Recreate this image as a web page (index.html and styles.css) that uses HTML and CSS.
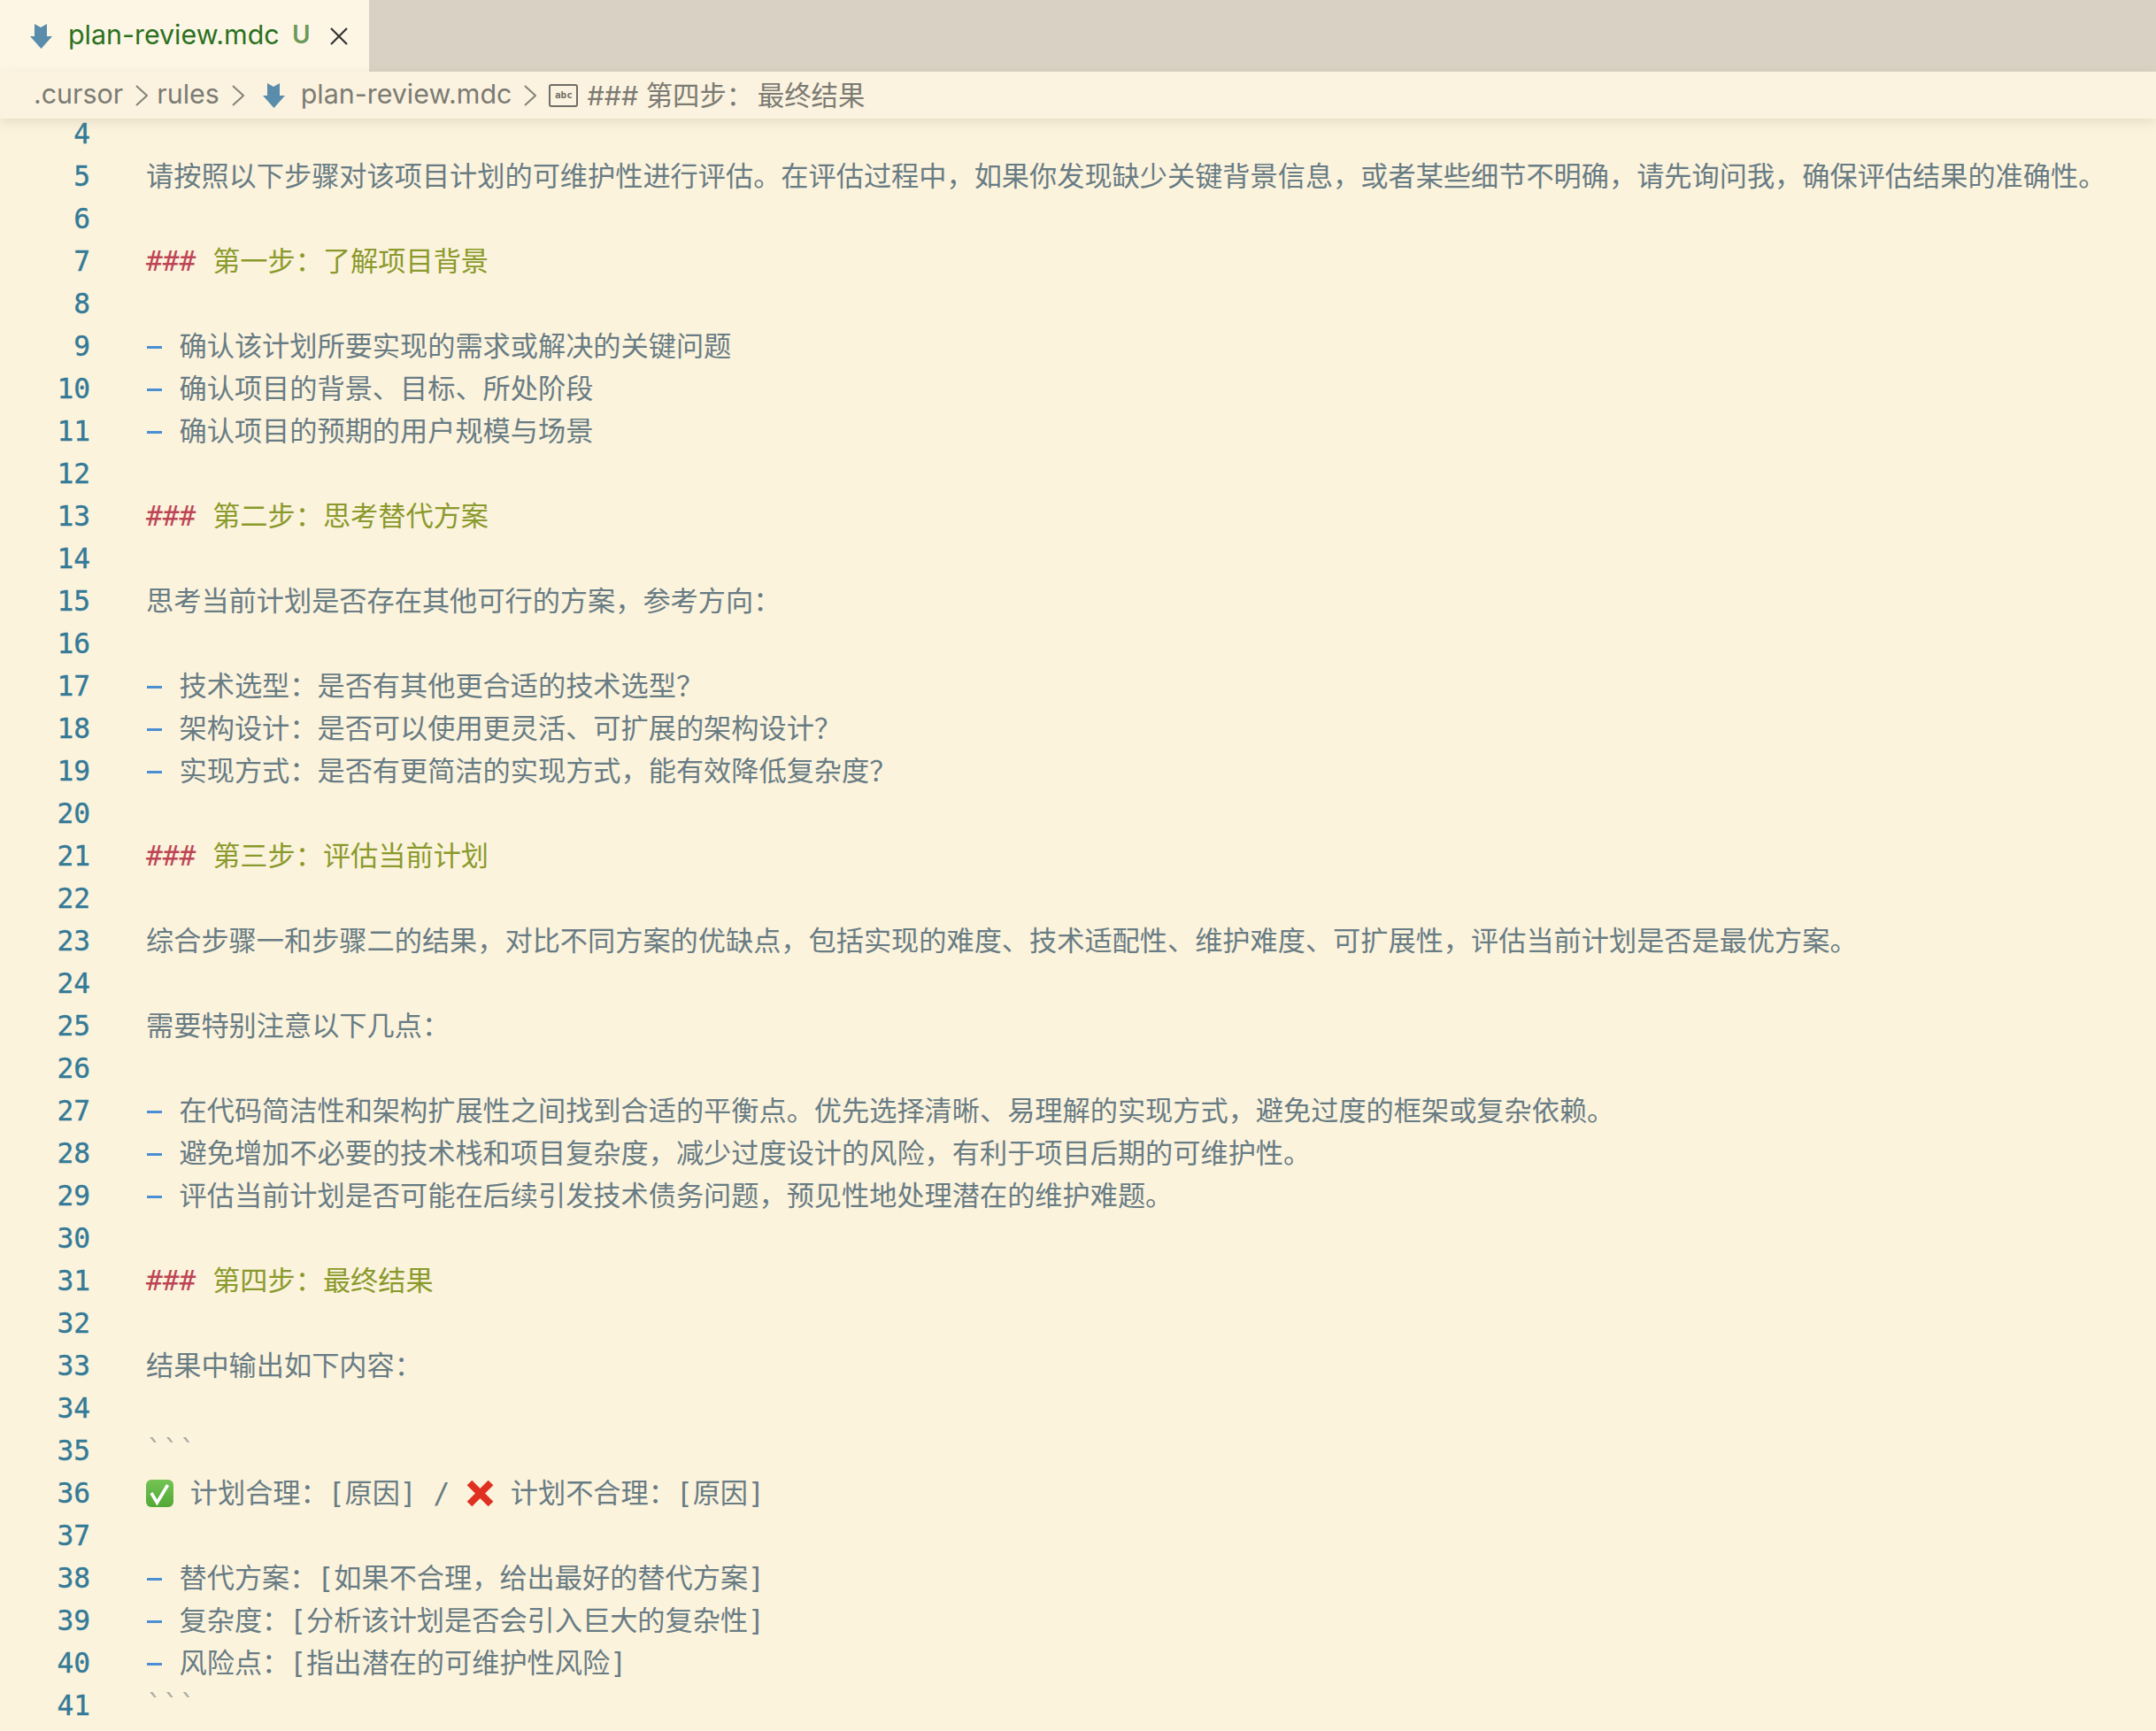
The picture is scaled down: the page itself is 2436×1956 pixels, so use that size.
FILE: index.html
```html
<!DOCTYPE html>
<html lang="zh">
<head>
<meta charset="utf-8">
<title>plan-review.mdc</title>
<link rel="stylesheet" href="styles.css">
</head>
<body>
<div class="window">
  <div class="tabbar">
    <div class="tab">
      <svg class="file-icon" viewBox="0 0 25 28"><path d="M5 0l7 4 7-4v14h6L12.500 28 0 14h5z"/></svg>
      <span class="tab-name">plan-review.mdc</span>
      <span class="tab-status">U</span>
      <svg class="tab-close" viewBox="0 0 20 20"><path d="M1 1l18 18M19 1L1 19"/></svg>
    </div>
  </div>
  <div class="crumbs">
    <span class="crumb">.cursor</span>
    <svg class="chev" viewBox="0 0 14 24"><path d="M1 1l12 11L1 23"/></svg>
    <span class="crumb">rules</span>
    <svg class="chev" viewBox="0 0 14 24"><path d="M1 1l12 11L1 23"/></svg>
    <svg class="file-icon crumb-icon" viewBox="0 0 25 28"><path d="M5 0l7 4 7-4v14h6L12.500 28 0 14h5z"/></svg>
    <span class="crumb">plan-review.mdc</span>
    <svg class="chev" viewBox="0 0 14 24"><path d="M1 1l12 11L1 23"/></svg>
    <span class="abc"><span class="abc-text">abc</span></span>
    <span class="crumb crumb-symbol">### 第四步： <span class="crumb-tail">最终结果</span></span>
  </div>
  <div class="editor">
    <div class="line"><span class="num">4</span><span class="code"></span></div>
    <div class="line"><span class="num">5</span><span class="code">请按照以下步骤对该项目计划的可维护性进行评估。在评估过程中，如果你发现缺少关键背景信息，或者某些细节不明确，请先询问我，确保评估结果的准确性。</span></div>
    <div class="line"><span class="num">6</span><span class="code"></span></div>
    <div class="line"><span class="num">7</span><span class="code"><span class="hash">###</span> <span class="head">第一步：了解项目背景</span></span></div>
    <div class="line"><span class="num">8</span><span class="code"></span></div>
    <div class="line"><span class="num">9</span><span class="code"><span class="dash">-</span> 确认该计划所要实现的需求或解决的关键问题</span></div>
    <div class="line"><span class="num">10</span><span class="code"><span class="dash">-</span> 确认项目的背景、目标、所处阶段</span></div>
    <div class="line"><span class="num">11</span><span class="code"><span class="dash">-</span> 确认项目的预期的用户规模与场景</span></div>
    <div class="line"><span class="num">12</span><span class="code"></span></div>
    <div class="line"><span class="num">13</span><span class="code"><span class="hash">###</span> <span class="head">第二步：思考替代方案</span></span></div>
    <div class="line"><span class="num">14</span><span class="code"></span></div>
    <div class="line"><span class="num">15</span><span class="code">思考当前计划是否存在其他可行的方案，参考方向：</span></div>
    <div class="line"><span class="num">16</span><span class="code"></span></div>
    <div class="line"><span class="num">17</span><span class="code"><span class="dash">-</span> 技术选型：是否有其他更合适的技术选型？</span></div>
    <div class="line"><span class="num">18</span><span class="code"><span class="dash">-</span> 架构设计：是否可以使用更灵活、可扩展的架构设计？</span></div>
    <div class="line"><span class="num">19</span><span class="code"><span class="dash">-</span> 实现方式：是否有更简洁的实现方式，能有效降低复杂度？</span></div>
    <div class="line"><span class="num">20</span><span class="code"></span></div>
    <div class="line"><span class="num">21</span><span class="code"><span class="hash">###</span> <span class="head">第三步：评估当前计划</span></span></div>
    <div class="line"><span class="num">22</span><span class="code"></span></div>
    <div class="line"><span class="num">23</span><span class="code">综合步骤一和步骤二的结果，对比不同方案的优缺点，包括实现的难度、技术适配性、维护难度、可扩展性，评估当前计划是否是最优方案。</span></div>
    <div class="line"><span class="num">24</span><span class="code"></span></div>
    <div class="line"><span class="num">25</span><span class="code">需要特别注意以下几点：</span></div>
    <div class="line"><span class="num">26</span><span class="code"></span></div>
    <div class="line"><span class="num">27</span><span class="code"><span class="dash">-</span> 在代码简洁性和架构扩展性之间找到合适的平衡点。优先选择清晰、易理解的实现方式，避免过度的框架或复杂依赖。</span></div>
    <div class="line"><span class="num">28</span><span class="code"><span class="dash">-</span> 避免增加不必要的技术栈和项目复杂度，减少过度设计的风险，有利于项目后期的可维护性。</span></div>
    <div class="line"><span class="num">29</span><span class="code"><span class="dash">-</span> 评估当前计划是否可能在后续引发技术债务问题，预见性地处理潜在的维护难题。</span></div>
    <div class="line"><span class="num">30</span><span class="code"></span></div>
    <div class="line"><span class="num">31</span><span class="code"><span class="hash">###</span> <span class="head">第四步：最终结果</span></span></div>
    <div class="line"><span class="num">32</span><span class="code"></span></div>
    <div class="line"><span class="num">33</span><span class="code">结果中输出如下内容：</span></div>
    <div class="line"><span class="num">34</span><span class="code"></span></div>
    <div class="line"><span class="num">35</span><span class="code"><span class="fence">```</span></span></div>
    <div class="line"><span class="num">36</span><span class="code"><svg class="emoji" viewBox="0 0 31 31"><defs><linearGradient id="green" x1="0" y1="0" x2="0" y2="1"><stop offset="0" stop-color="#74c454"/><stop offset="1" stop-color="#52a836"/></linearGradient></defs><rect width="31" height="31" rx="6" fill="url(#green)"/><path d="M6 15l6.500 11L24.500 6" fill="none" stroke="#fff" stroke-width="3.600"/></svg> 计划合理：[原因] / <svg class="emoji" viewBox="0 0 31 31"><path d="M3.500 3.500l24 24M27.500 3.500l-24 24" fill="none" stroke="#df3021" stroke-width="8"/></svg> 计划不合理：[原因]</span></div>
    <div class="line"><span class="num">37</span><span class="code"></span></div>
    <div class="line"><span class="num">38</span><span class="code"><span class="dash">-</span> 替代方案：[如果不合理，给出最好的替代方案]</span></div>
    <div class="line"><span class="num">39</span><span class="code"><span class="dash">-</span> 复杂度：[分析该计划是否会引入巨大的复杂性]</span></div>
    <div class="line"><span class="num">40</span><span class="code"><span class="dash">-</span> 风险点：[指出潜在的可维护性风险]</span></div>
    <div class="line"><span class="num">41</span><span class="code"><span class="fence">```</span></span></div>
  </div>
</div>
</body>
</html>
```

FILE: styles.css
```css
html, body {
  margin: 0;
  padding: 0;
  background: #fcf3dd;
}
.window {
  width: 2436px;
  height: 1956px;
  overflow: hidden;
  display: flex;
  flex-direction: column;
  font-family: Inter, "Noto Sans CJK SC", sans-serif;
}
.tabbar {
  height: 81px;
  flex: none;
  background: #d9d1c3;
  display: flex;
}
.tab {
  width: 417px;
  box-sizing: border-box;
  padding: 0 0 0 34px;
  background: #fdf6e4;
  display: flex;
  align-items: center;
}
.file-icon {
  width: 25px;
  height: 28px;
  flex: none;
  fill: #5a8cab;
}
.tab-name {
  margin: -3px 0 0 18px;
  font-size: 30.400px;
  color: #2b701f;
  width: 238px;
  white-space: nowrap;
}
.tab-status {
  margin: -3px 0 0 15px;
  width: 18px;
  font-size: 28px;
  font-weight: 600;
  color: #6a9a58;
}
.tab-close {
  margin-left: 25px;
  width: 20px;
  height: 20px;
  fill: none;
  stroke: #333;
  stroke-width: 2.200;
}
.crumbs {
  position: relative;
  z-index: 2;
  height: 53px;
  flex: none;
  box-sizing: border-box;
  padding-left: 38px;
  background: #fbf3df;
  display: flex;
  align-items: center;
  box-shadow: 0 4px 12px rgba(120, 110, 90, 0.16);
  font-size: 30.400px;
  color: #7c7b74;
  white-space: nowrap;
}
.crumb {
  margin-top: -3px;
}
.chev {
  width: 14px;
  height: 24px;
  margin: 0 10px 0 14px;
  flex: none;
  fill: none;
  stroke: #84827a;
  stroke-width: 2;
}
.crumb-icon {
  margin: 0 18px 0 11px;
}
.abc {
  width: 33px;
  height: 26px;
  margin-left: 4px;
  box-sizing: border-box;
  border: 2px solid #6f6e68;
  border-radius: 3px;
  display: flex;
  align-items: center;
  justify-content: center;
  flex: none;
}
.abc-text {
  font: 700 11px/1 "DejaVu Sans Mono", monospace;
  color: #6f6e68;
}
.crumb-symbol {
  margin-left: 10px;
}
.crumb-tail {
  margin-left: -4px;
}
.editor {
  flex: 1;
  min-height: 0;
  margin-top: -7px;
  font-family: "DejaVu Sans Mono", "Noto Sans CJK SC", monospace;
  font-size: 31.200px;
  color: #687c84;
}
.line {
  height: 48px;
  line-height: 48px;
  display: flex;
  white-space: pre;
}
.num {
  width: 102px;
  flex: none;
  text-align: right;
  color: #347a97;
  -webkit-text-stroke: 0.4px #347a97;
}
.code {
  margin-left: 63px;
}
.hash {
  color: #bd4555;
}
.head {
  color: #8a9a2c;
}
.dash {
  display: inline-block;
  color: #4a8fd4;
  background: linear-gradient(#4a8fd4, #4a8fd4) 1px 24px / 17px 3px no-repeat;
}
.fence {
  color: #a7ab9f;
}
.emoji {
  width: 31px;
  height: 31px;
  vertical-align: -5px;
}
```
